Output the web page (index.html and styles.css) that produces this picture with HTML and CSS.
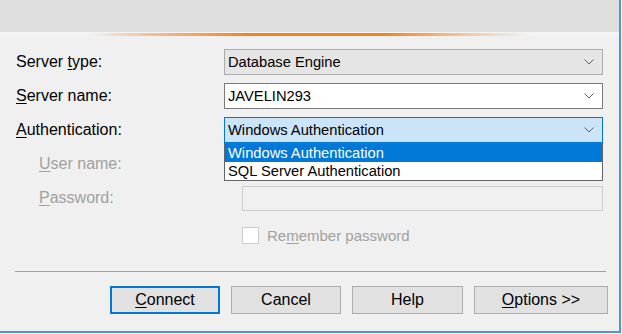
FILE: index.html
```html
<!DOCTYPE html>
<html lang="en">
<head>
  <meta charset="UTF-8">
  <title>Connect to Server</title>
  <link rel="stylesheet" href="styles.css">
</head>
<body>
  <div class="dialog">
    <!-- banner + accent line -->
    <div class="banner"></div>
    <div class="accent"><div class="accent-line"></div></div>

    <div class="form">
      <div class="label">Server <u>t</u>ype:</div>
      <div class="combo combo-readonly">
        <span>Database Engine</span>
        <svg class="chev" width="10" height="6" viewBox="0 0 10 6"><polyline points="0.5,0.5 5,5 9.5,0.5" fill="none" stroke="#606060" stroke-width="1"/></svg>
      </div>

      <div class="label"><u>S</u>erver name:</div>
      <div class="combo combo-edit">
        <span>JAVELIN293</span>
        <svg class="chev" width="10" height="6" viewBox="0 0 10 6"><polyline points="0.5,0.5 5,5 9.5,0.5" fill="none" stroke="#606060" stroke-width="1"/></svg>
      </div>

      <div class="label"><u>A</u>uthentication:</div>
      <div class="combo combo-open">
        <span>Windows Authentication</span>
        <svg class="chev" width="10" height="6" viewBox="0 0 10 6"><polyline points="0.5,0.5 5,5 9.5,0.5" fill="none" stroke="#606060" stroke-width="1"/></svg>
        <!-- open dropdown list -->
        <div class="dropdown">
          <div class="option selected">Windows Authentication</div>
          <div class="option">SQL Server Authentication</div>
        </div>
      </div>

      <div class="label label-sub disabled"><u>U</u>ser name:</div>
      <div class="textbox"></div>

      <div class="label label-sub disabled"><u>P</u>assword:</div>
      <div class="textbox"></div>

      <div></div>
      <div class="remember">
        <div class="checkbox"></div>
        <span class="disabled">Re<u>m</u>ember password</span>
      </div>
    </div>

    <div class="separator"></div>

    <div class="buttons">
      <div class="btn btn-default"><u>C</u>onnect</div>
      <div class="btn">Cancel</div>
      <div class="btn btn-help">Help</div>
      <div class="btn btn-options"><u>O</u>ptions &gt;&gt;</div>
    </div>
  </div>
</body>
</html>
```

FILE: styles.css
```css
/* ===============================
   BASE
=============================== */
html, body {
  margin: 0;
  padding: 0;
  background: #f7f7f7;
}
body {
  width: 622px;
  height: 334px;
  overflow: hidden;
  font-family: 'Liberation Sans', Arial, sans-serif;
  color: #000;
}
u {
  text-decoration: underline;
  text-underline-offset: 2px;
}

/* Finestra */
.dialog {
  width: 619px;
  background: #f0f0f0;
  border-right: 2px solid #4f96d9;
  border-bottom: 2px solid #4f96d9;
  padding-bottom: 17px;
}

/* ===============================
   BANNER
=============================== */
.banner {
  height: 32px;
  background: #dfdfdf;
}
.accent {
  height: 4px;
  background: #f3f4f6;
  display: flex;
  align-items: center;
}
.accent-line {
  height: 3px;
  width: 100%;
  background: linear-gradient(90deg,
    rgba(247, 130, 26, 0) 14%,
    rgba(247, 130, 26, 0.45) 24%,
    #f7821a 40%,
    #f7821a 62%,
    rgba(247, 130, 26, 0.45) 74%,
    rgba(247, 130, 26, 0) 86%);
}

/* ===============================
   FORM
=============================== */
.form {
  display: grid;
  grid-template-columns: 208px 379px;
  grid-template-rows: repeat(6, 26px);
  row-gap: 8px;
  padding: 13px 0 0 16px;
}
.label {
  font-size: 16px;
  align-self: center;
  white-space: nowrap;
}
.label-sub {
  padding-left: 23px;
}
.disabled {
  color: #a0a0a0;
}

.combo {
  position: relative;
  display: flex;
  align-items: center;
  justify-content: space-between;
  box-sizing: border-box;
  height: 26px;
  padding: 0 8px 0 3px;
  font-size: 14.7px;
  border: 1px solid #acacac;
}
.combo-readonly {
  background: #e5e5e5;
}
.combo-edit {
  background: #fff;
  border-color: #7a7a7a;
}
.combo-open {
  background: #cce4f7;
  border-color: #0078d7;
}
.chev {
  display: block;
}

/* Lista aperta */
.dropdown {
  position: absolute;
  left: -1px;
  right: -1px;
  top: 25px;
  background: #fff;
  border: 1px solid #646464;
  z-index: 2;
}
.option {
  height: 18px;
  line-height: 18px;
  padding-left: 3px;
  font-size: 14.7px;
}
.option.selected {
  background: #0078d7;
  color: #fff;
}

.textbox {
  box-sizing: border-box;
  height: 25px;
  margin-left: 18px;
  align-self: end;
  background: #f0f0f0;
  border: 1px solid #cccccc;
}

.remember {
  display: flex;
  align-items: center;
  gap: 8px;
  margin-left: 18px;
  align-self: end;
  margin-bottom: 1px;
  font-size: 15px;
}
.checkbox {
  width: 17px;
  height: 17px;
  box-sizing: border-box;
  background: #fff;
  border: 1px solid #cccccc;
}

/* ===============================
   SEPARATOR + BUTTONS
=============================== */
.separator {
  height: 1px;
  margin: 26px 13px 0 15px;
  background: #a0a0a0;
}
.buttons {
  display: flex;
  justify-content: flex-end;
  gap: 11px;
  margin-top: 14px;
  padding-right: 11px;
}
.btn {
  box-sizing: border-box;
  width: 110px;
  height: 28px;
  display: flex;
  align-items: center;
  justify-content: center;
  font-size: 16px;
  background: #e1e1e1;
  border: 1px solid #adadad;
}
.btn-default {
  border: 2px solid #0078d7;
}
.btn-help {
  width: 111px;
}
.btn-options {
  width: 134px;
}
```
